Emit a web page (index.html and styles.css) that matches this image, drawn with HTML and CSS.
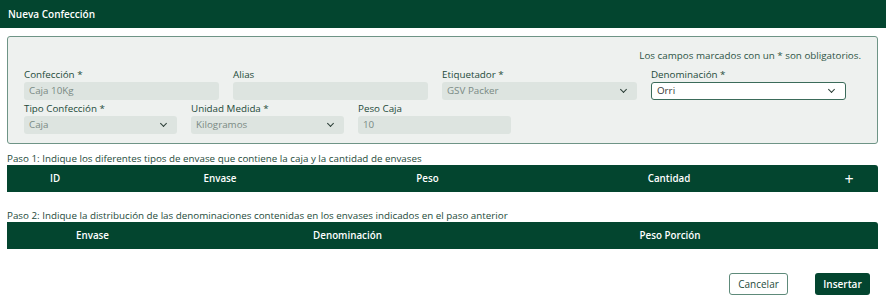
FILE: index.html
```html
<!DOCTYPE html>
<html lang="es">
<head>
  <meta charset="UTF-8">
  <meta name="viewport" content="width=device-width, initial-scale=1.0">
  <title>Nueva Confección</title>
  <link rel="stylesheet" href="styles.css">
</head>
<body>

  <div class="modal-header">Nueva Confección</div>

  <div class="modal-body">
    <div class="form-panel">
      <p class="required-note">Los campos marcados con un * son obligatorios.</p>

      <div class="form-row row-four">
        <div class="form-group">
          <label>Confección *</label>
          <div class="field disabled">Caja 10Kg</div>
        </div>
        <div class="form-group">
          <label>Alias</label>
          <div class="field disabled"></div>
        </div>
        <div class="form-group">
          <label>Etiquetador *</label>
          <div class="field disabled select">GSV Packer <span class="chevron"></span></div>
        </div>
        <div class="form-group">
          <label>Denominación *</label>
          <div class="field active select">Orri <span class="chevron"></span></div>
        </div>
      </div>

      <div class="form-row row-three">
        <div class="form-group">
          <label>Tipo Confección *</label>
          <div class="field disabled select">Caja <span class="chevron"></span></div>
        </div>
        <div class="form-group">
          <label>Unidad Medida *</label>
          <div class="field disabled select">Kilogramos <span class="chevron"></span></div>
        </div>
        <div class="form-group">
          <label>Peso Caja</label>
          <div class="field disabled">10</div>
        </div>
      </div>
    </div>

    <p class="step">Paso 1: Indique los diferentes tipos de envase que contiene la caja y la cantidad de envases</p>
    <div class="table-head cols-step1">
      <span>ID</span>
      <span>Envase</span>
      <span>Peso</span>
      <span>Cantidad</span>
      <span class="add">+</span>
    </div>

    <p class="step step-two">Paso 2: Indique la distribución de las denominaciones contenidas en los envases indicados en el paso anterior</p>
    <div class="table-head cols-step2">
      <span>Envase</span>
      <span>Denominación</span>
      <span>Peso Porción</span>
      <span></span>
    </div>

    <div class="actions">
      <button class="btn btn-outline">Cancelar</button>
      <button class="btn btn-primary">Insertar</button>
    </div>
  </div>

</body>
</html>
```

FILE: styles.css
```css
body {
  font-family: 'Open Sans', sans-serif;
  font-size: 9.8px;
  color: #1d4a3a;
  background-color: white;
  margin: 0;
}
.modal-header {
  background-color: #03452f;
  color: white;
  font-weight: 600;
  height: 28px;
  line-height: 28px;
  padding-left: 8px;
  font-size: 10px;
}
.modal-body {
  padding: 8px 8px 0 7px;
}
.form-panel {
  background-color: #eef1ef;
  border: 1px solid #6e9486;
  border-radius: 3px;
  padding: 7px 16px 9px 16px;
  height: 90px;
}
.required-note {
  margin: 0;
  text-align: right;
  line-height: 24px;
  color: #2d5446;
}
.form-row {
  display: grid;
  column-gap: 14px;
}
.row-four {
  grid-template-columns: repeat(4, 195px);
}
.row-three {
  grid-template-columns: repeat(3, 153px);
  margin-top: 2px;
}
.form-group label {
  display: block;
  line-height: 14px;
  font-weight: 500;
  color: #1d4a3a;
}
.field {
  height: 18px;
  line-height: 18px;
  border-radius: 3px;
  padding: 0 5px;
  color: #7a8a84;
  position: relative;
  box-sizing: border-box;
}
.field.disabled {
  background-color: #dde4e0;
}
.field.active {
  background-color: white;
  border: 1px solid #3b6b5a;
  line-height: 16px;
  color: #333;
}
.chevron {
  position: absolute;
  right: 11px;
  top: 5px;
  width: 4px;
  height: 4px;
  border-right: 1.8px solid #2a3d36;
  border-bottom: 1.8px solid #2a3d36;
  transform: rotate(45deg);
}
.field.active .chevron {
  top: 4px;
}
.step {
  margin: 8px 0 0 0;
  line-height: 13px;
  color: #1d4a3a;
}
.step-two {
  margin-top: 17px;
}
.table-head {
  display: grid;
  background-color: #03452f;
  color: white;
  font-weight: 600;
  height: 27px;
  align-items: center;
  text-align: center;
  border-radius: 0 3px 0 0;
}
.cols-step1 {
  grid-template-columns: 96px 234px 181px 302px 58px;
}
.cols-step1 .add {
  font-size: 16px;
  font-weight: normal;
}
.cols-step2 {
  grid-template-columns: 171px 339px 306px 1fr;
}
.actions {
  display: flex;
  justify-content: flex-end;
  gap: 27px;
  margin-top: 24px;
  padding-right: 8px;
}
.btn {
  font-family: inherit;
  font-size: 10px;
  height: 22px;
  border-radius: 3px;
  cursor: pointer;
}
.btn-outline {
  background: white;
  color: #1d4a3a;
  border: 1px solid #5e8a7a;
  width: 59px;
}
.btn-primary {
  background-color: #03452f;
  color: white;
  border: none;
  font-weight: 600;
  width: 55px;
}
```
